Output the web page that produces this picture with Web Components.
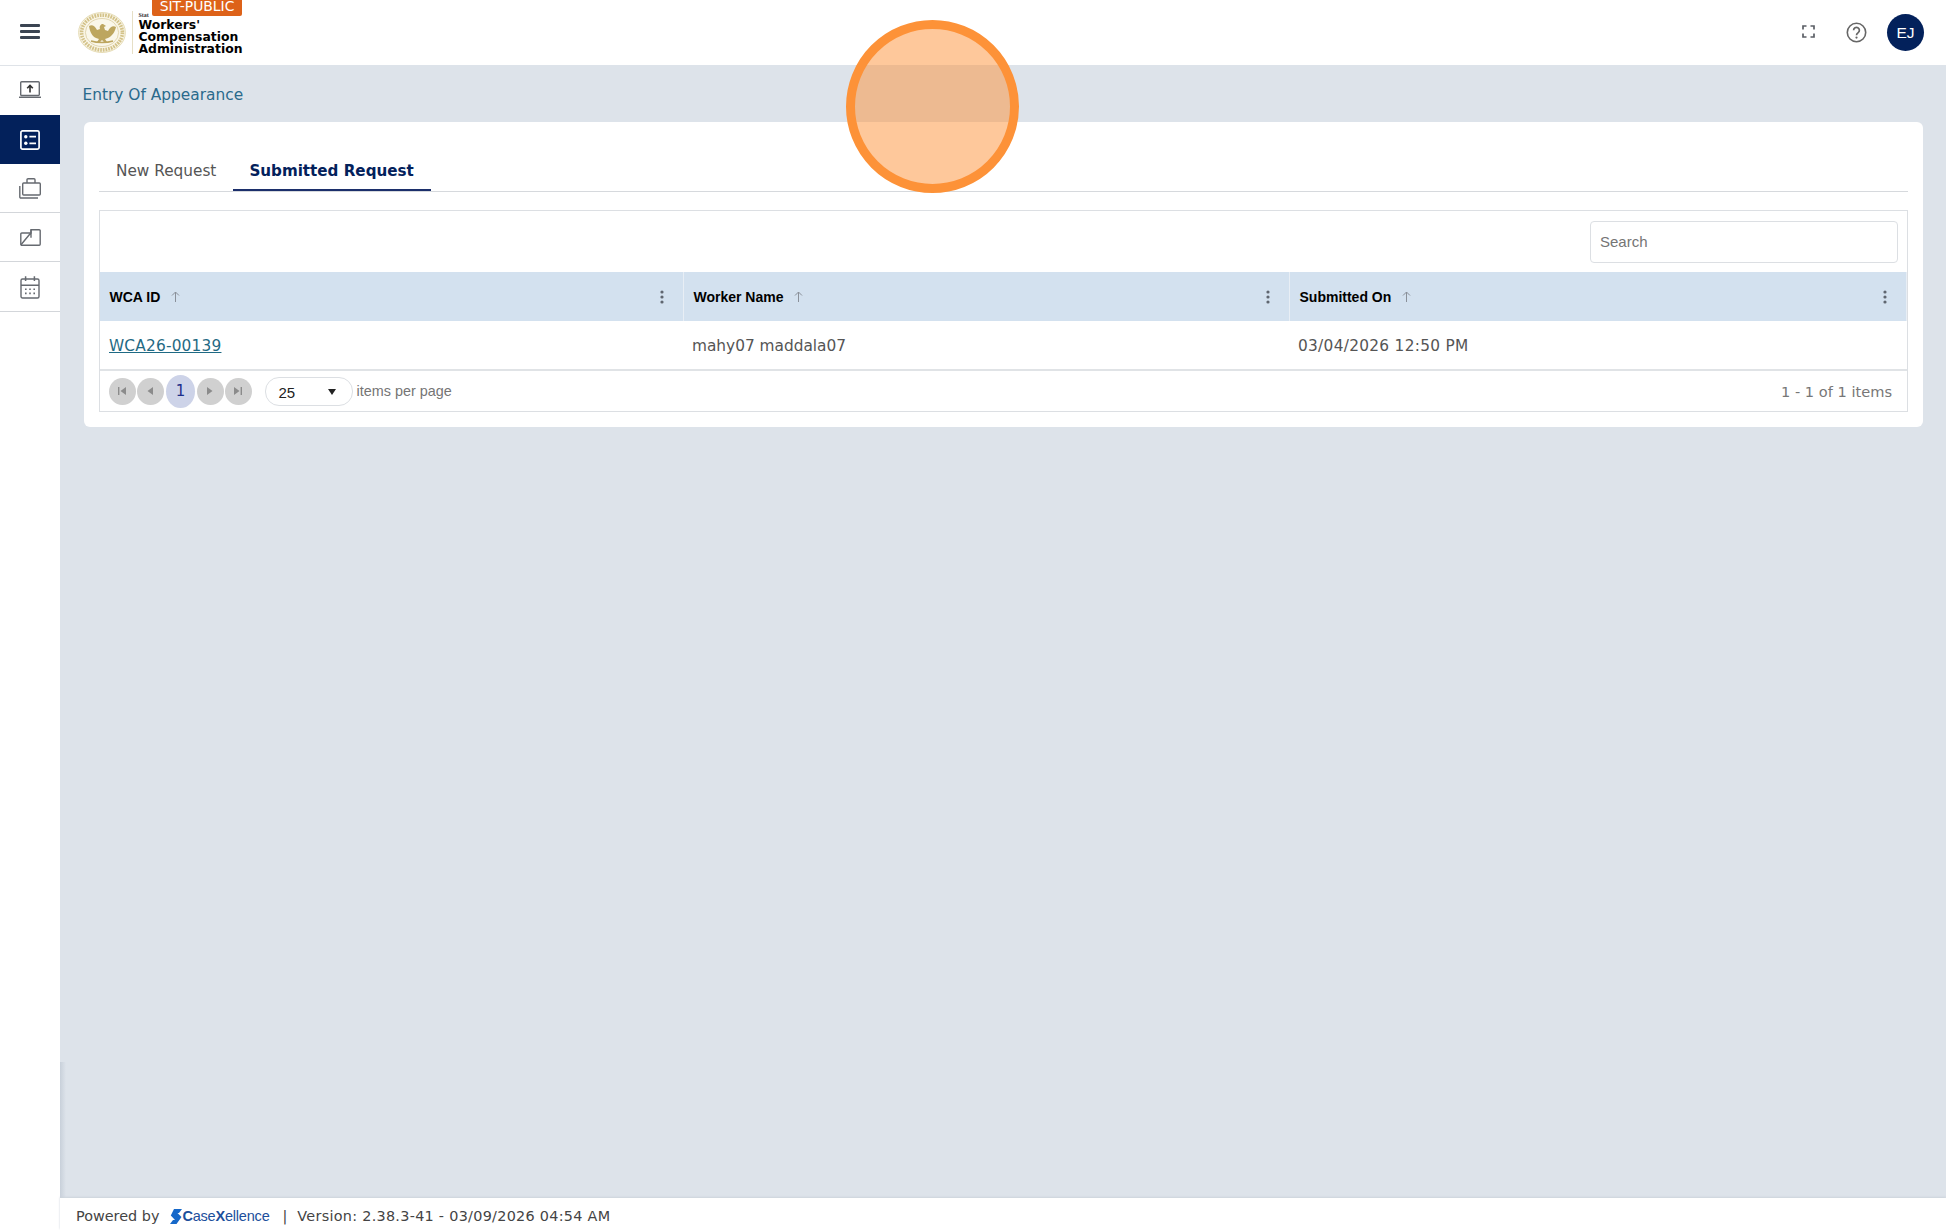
<!DOCTYPE html>
<html lang="en">
<head>
<meta charset="utf-8">
<title>Entry Of Appearance</title>
<style>
  html, body { margin: 0; height: 100%; }
  body { font-family: "DejaVu Sans", sans-serif; overflow: hidden; background: #dde3ea; }
</style>
</head>
<body>
<app-shell>
  <app-header slot="header"></app-header>
  <app-sidebar slot="sidebar"></app-sidebar>
  <page-title>Entry Of Appearance</page-title>
  <content-card>
    <tab-strip></tab-strip>
    <request-grid></request-grid>
  </content-card>
  <app-footer slot="footer"></app-footer>
</app-shell>
<click-marker></click-marker>

<script>
class AppShell extends HTMLElement {
  connectedCallback() {
    this.attachShadow({ mode: 'open' });
    this.shadowRoot.innerHTML = `
      <style>
        :host { display: flex; flex-direction: column; height: 1230px; }
        .body { flex: 1; display: flex; min-height: 0; }
        .main { flex: 1; display: flex; flex-direction: column; min-width: 0;
                background: linear-gradient(to right, #c8d0da, #dde3ea 6px) left bottom / 6px 168px no-repeat; }
        .content { flex: 1; padding: 0 23px 0 24px; }
      </style>
      <slot name="header"></slot>
      <div class="body">
        <slot name="sidebar"></slot>
        <div class="main">
          <div class="content"><slot></slot></div>
          <slot name="footer"></slot>
        </div>
      </div>
    `;
  }
}

class AppHeader extends HTMLElement {
  connectedCallback() {
    this.attachShadow({ mode: 'open' });
    this.shadowRoot.innerHTML = `
      <style>
        :host { display: flex; align-items: center; height: 65px; background: #fff; color: #000; }
        .menu { width: 20px; margin: 0 38px 2px 20px; display: flex; flex-direction: column; gap: 3.7px; }
        .menu i { display: block; height: 2.3px; background: #3b4452; border-radius: 1px; }
        .logo { position: relative; display: flex; align-items: center; height: 65px; }
        .rule { width: 1px; height: 43px; background: #e6dfc6; margin: 0 6px 0 5.5px; }
        .words { display: flex; flex-direction: column; padding-top: 2px; }
        .state { font: 700 6px/7px "Liberation Serif", serif; color: #333; }
        .name { font-weight: 700; font-size: 12.4px; line-height: 12px; }
        .badge { position: absolute; left: 74px; top: 0; width: 90px; height: 16px; background: #dd6219; color: #fff;
                 font-size: 13.9px; line-height: 12px; text-align: center; border-radius: 0 0 2px 2px; white-space: nowrap; }
        .spacer { flex: 1; }
        .tools { display: flex; align-items: center; }
        svg { display: block; }
        .avatar { width: 37px; height: 37px; border-radius: 50%; background: #03215b; color: #fff; font: 15.5px "Liberation Sans", sans-serif;
                  display: flex; align-items: center; justify-content: center; margin: 0 22px 0 20px; }
      </style>
      <div class="menu"><i></i><i></i><i></i></div>
      <div class="logo">
        <svg width="48" height="41" viewBox="0 0 48 41">
          <ellipse cx="24" cy="20.5" rx="23.4" ry="20" fill="#f9f5e6" stroke="#e0d4a6" stroke-width=".8"/>
          <ellipse cx="24" cy="20.5" rx="20.4" ry="17.4" fill="none" stroke="#d3c289" stroke-width="3.6" stroke-dasharray="1.7 1"/>
          <ellipse cx="24" cy="20.5" rx="16.6" ry="14" fill="#faf7ea" stroke="#d8c998" stroke-width=".7"/>
          <path d="M11 14c3-2 6 0 8 4l3-1c-1-3 1-5 3-5l3 2-2 1 1 3 3 1c2-4 5-6 8-4-1 5-4 9-8 11l-3 1 2 3h-3l-2-2-2 2h-3l2-3-3-1c-4-2-6-6-7-12z" fill="#bda65f"/>
          <path d="M13 29c6 2 16 2 22 0" fill="none" stroke="#bda65f" stroke-width="1.6"/>
        </svg>
        <div class="rule"></div>
        <div class="words">
          <div class="state">Stat</div>
          <div class="name">Workers'<br>Compensation<br>Administration</div>
        </div>
        <div class="badge">SIT-PUBLIC</div>
      </div>
      <div class="spacer"></div>
      <div class="tools">
        <svg width="13" height="13" viewBox="0 0 13 13" fill="none" stroke="#5b5f66" stroke-width="1.7" style="margin:0 31px 2px 0">
          <path d="M1 4.5V1h3.5M8.5 1H12v3.5M12 8.5V12H8.5M4.5 12H1V8.5"/>
        </svg>
        <svg width="21" height="21" viewBox="0 0 21 21" fill="none" stroke="#666" stroke-width="1.6">
          <circle cx="10.5" cy="10.5" r="9.2"/>
          <path d="M7.6 8.2a2.9 2.9 0 1 1 4.6 2.4c-1.1.8-1.7 1.3-1.7 2.6" stroke-width="1.7"/>
          <circle cx="10.5" cy="15.6" r="1.1" fill="#666" stroke="none"/>
        </svg>
        <div class="avatar">EJ</div>
      </div>
    `;
  }
}

class AppSidebar extends HTMLElement {
  connectedCallback() {
    this.attachShadow({ mode: 'open' });
    this.shadowRoot.innerHTML = `
      <style>
        :host { display: block; width: 60px; flex: none; background: #fff; border-top: 1px solid #dfe3e8; box-sizing: border-box; }
        .item { height: 49px; display: flex; align-items: center; justify-content: center; border-bottom: 1px solid #d3d6da; color: #666a70; box-sizing: border-box; }
        .item.first { border-bottom: none; padding-bottom: 2px; }
        .item.tall { height: 50px; padding-top: 2px; }
        .item.active { background: #03215b; color: #fff; border-bottom: none; }
        svg { display: block; fill: none; stroke: currentColor; stroke-width: 1.4; }
      </style>
      <div class="item first">
        <svg width="22" height="17" viewBox="0 0 22 17">
          <rect x="1.7" y=".7" width="18.6" height="13.8" rx="1"/>
          <path d="M0 16.3h22" stroke-width="1.5"/>
          <path d="M11 11.5V4.6M8.2 7.2L11 4.4l2.8 2.8" stroke="#333" stroke-width="1.6"/>
        </svg>
      </div>
      <div class="item active">
        <svg width="20" height="20" viewBox="0 0 20 20">
          <rect x=".9" y=".9" width="18.2" height="18.2" rx="1.6" stroke-width="1.7"/>
          <circle cx="5.8" cy="6.7" r="1.7" fill="currentColor" stroke="none"/>
          <circle cx="5.8" cy="13.3" r="1.7" fill="currentColor" stroke="none"/>
          <path d="M9.4 6.7h6.6M9.4 13.3h6.6" stroke-width="1.7"/>
        </svg>
      </div>
      <div class="item">
        <svg width="22" height="21" viewBox="0 0 22 21">
          <rect x="3.7" y="5" width="17.6" height="12" rx="1"/>
          <path d="M8 5V1.7a1 1 0 0 1 1-1h6a1 1 0 0 1 1 1V5"/>
          <path d="M.8 8v11a1 1 0 0 0 1 1H19"/>
        </svg>
      </div>
      <div class="item">
        <svg width="21" height="17" viewBox="0 0 21 17" stroke-width="1.6">
          <path d="M11 .8h8.2a1 1 0 0 1 1 1v13.4a1 1 0 0 1-1 1H1.8a1 1 0 0 1-1-1V5a1 1 0 0 1 1-1H11z"/>
          <path d="M1 15.7L10.5 4.3M11 .8v8"/>
        </svg>
      </div>
      <div class="item tall">
        <svg width="20" height="23" viewBox="0 0 20 23">
          <rect x="1" y="3" width="18" height="19" rx="1.5"/>
          <path d="M1 9.2h18M5.6 .3v4.6M14.4 .3v4.6" stroke-width="1.5"/>
          <path d="M5 13.2h1.6M9.2 13.2h1.6M13.4 13.2h1.6M5 17.4h1.6M9.2 17.4h1.6M13.4 17.4h1.6" stroke-width="1.6"/>
        </svg>
      </div>
    `;
  }
}

class PageTitle extends HTMLElement {
  connectedCallback() {
    this.attachShadow({ mode: 'open' });
    this.shadowRoot.innerHTML = `
      <style>
        :host { display: block; height: 57px; box-sizing: border-box; padding-top: 20px; margin-left: -1.5px; color: #2a6a8c; font-size: 15.4px; line-height: 20px; }
      </style>
      <slot></slot>
    `;
  }
}

class ContentCard extends HTMLElement {
  connectedCallback() {
    this.attachShadow({ mode: 'open' });
    this.shadowRoot.innerHTML = `
      <style>
        :host { display: block; background: #fff; border-radius: 6px; padding: 26px 15px 15px; }
      </style>
      <slot></slot>
    `;
  }
}

class TabStrip extends HTMLElement {
  connectedCallback() {
    this.attachShadow({ mode: 'open' });
    this.shadowRoot.innerHTML = `
      <style>
        :host { display: flex; height: 43px; border-bottom: 1px solid #d6d9dd; margin-bottom: 18px; }
        .tab { padding: 0 17px; line-height: 46px; height: 41px; font-size: 15.3px; color: #555; white-space: nowrap; }
        .tab.on { padding-left: 16px; color: #03215b; font-size: 15.15px; font-weight: 700; border-bottom: 2px solid #1c2f6b; }
      </style>
      <div class="tab">New Request</div>
      <div class="tab on">Submitted Request</div>
    `;
  }
}

class RequestGrid extends HTMLElement {
  connectedCallback() {
    this.attachShadow({ mode: 'open' });
    const head = (label) => `
      <div class="th">
        <span class="label">${label}</span>
        <svg class="sort" width="9" height="11" viewBox="0 0 9 11" fill="none" stroke="#8a9099" stroke-width="1"><path d="M4.5 11V1M1 4.5l3.5-3.5L8 4.5"/></svg>
        <svg class="kebab" width="4" height="14" viewBox="0 0 4 14" fill="#5f6670"><circle cx="2" cy="2" r="1.6"/><circle cx="2" cy="7" r="1.6"/><circle cx="2" cy="12" r="1.6"/></svg>
      </div>`;
    this.shadowRoot.innerHTML = `
      <style>
        :host { display: block; border: 1px solid #dcdfe3; color: #555; }
        .toolbar { height: 61px; display: flex; justify-content: flex-end; align-items: center; padding-right: 9px; }
        input { width: 308px; height: 42px; box-sizing: border-box; border: 1px solid #dcdfe3; border-radius: 4px; padding: 0 9px;
                font: 15px "Liberation Sans", sans-serif; outline: none; }
        input::placeholder { color: #757575; opacity: 1; }
        .cols { display: grid; grid-template-columns: 584px 606px 1fr; }
        .th { height: 49px; background: #d3e1ef; display: flex; align-items: center; padding: 0 19px 0 9.5px; box-sizing: border-box;
              border-right: 1px solid #e8eef5; font: 700 14px "Liberation Sans", sans-serif; color: #000; }
        .th:last-child { border-right: none; }
        .sort { margin-left: 10.5px; }
        .kebab { margin-left: auto; }
        .td { height: 48px; box-sizing: border-box; display: flex; align-items: center; padding: 2px 8px 0; font-size: 15.35px; }
        .td.first { padding-left: 9px; }
        .td.num { letter-spacing: .3px; }
        a { color: #1f6a84; text-decoration: underline; letter-spacing: .2px; }
        .pager { height: 40px; border-top: 2px solid #e0e3e6; display: flex; align-items: center; padding: 0 15px 0 9px; font: 14.4px "Liberation Sans", sans-serif; color: #757575; }
        .btn { width: 26.5px; height: 27px; border-radius: 50%; background: #d0d0d0; margin-right: 1.5px; display: flex; align-items: center; justify-content: center; }
        .btn.prev { margin-right: 2.5px; }
        .btn svg { display: block; fill: #8b8b8b; }
        .page { width: 29px; height: 33px; border-radius: 50%; background: #cdd3e8; color: #1c2f8b; margin-right: 2px; display: flex; align-items: center; justify-content: center; font: 15px "DejaVu Sans", sans-serif; }
        .select { width: 88px; height: 29px; box-sizing: border-box; border: 1px solid #dcdfe3; border-radius: 14px; margin: 0 4px 0 11.5px; display: flex; align-items: center; justify-content: space-between; padding: 2px 16px 0 13px; color: #222; font-size: 15px; }
        .select svg { display: block; fill: #222; }
        .count { margin-left: auto; font: 14.6px "DejaVu Sans", sans-serif; color: #777; }
      </style>
      <div class="toolbar"><input placeholder="Search"></div>
      <div class="cols">
        ${head('WCA ID')}${head('Worker Name')}${head('Submitted On')}
        <div class="td first"><a href="#">WCA26-00139</a></div>
        <div class="td">mahy07 maddala07</div>
        <div class="td num">03/04/2026 12:50 PM</div>
      </div>
      <div class="pager">
        <div class="btn"><svg width="10" height="10" viewBox="0 0 10 10"><path d="M1 1h1.4v8H1zM9 1v8L3.5 5z"/></svg></div>
        <div class="btn prev"><svg width="10" height="10" viewBox="0 0 10 10"><path d="M8 1v8L2.5 5z"/></svg></div>
        <div class="page">1</div>
        <div class="btn"><svg width="10" height="10" viewBox="0 0 10 10"><path d="M2 1v8l5.5-4z"/></svg></div>
        <div class="btn"><svg width="10" height="10" viewBox="0 0 10 10"><path d="M1 1v8l5.5-4zM7.6 1H9v8H7.6z"/></svg></div>
        <div class="select"><span>25</span><svg width="8" height="6" viewBox="0 0 8 6"><path d="M0 0h8L4 6z"/></svg></div>
        <span>items per page</span>
        <span class="count">1 - 1 of 1 items</span>
      </div>
    `;
  }
}

class AppFooter extends HTMLElement {
  connectedCallback() {
    this.attachShadow({ mode: 'open' });
    this.shadowRoot.innerHTML = `
      <style>
        :host { display: flex; align-items: center; height: 29px; padding: 3px 0 0 16px; background: #fff; font-size: 14.4px; color: #444; box-shadow: 0 -1px 2px #ccd3db; white-space: nowrap; }
        .brand { display: flex; align-items: center; margin: 1px 13px 0 11px; color: #1c4f9c; font: 14.5px "Liberation Sans", sans-serif; letter-spacing: -.2px; }
        .brand b { font-weight: 700; }
        svg { display: block; }
        .version { letter-spacing: .28px; }
      </style>
      <span>Powered by</span>
      <span class="brand">
        <svg width="12" height="15" viewBox="0 0 12 15"><path d="M4 0h8L9 4H7.5l4 4-5 7H0l3-4h2L.8 6.5z" fill="#1668c9"/></svg>
        <span><b>C</b>ase<b>X</b>ellence</span>
      </span>
      <span class="version">|&nbsp;&nbsp;Version: 2.38.3-41 - 03/09/2026 04:54 AM</span>
    `;
  }
}

class ClickMarker extends HTMLElement {
  connectedCallback() {
    this.attachShadow({ mode: 'open' });
    this.shadowRoot.innerHTML = `
      <style>
        :host { position: absolute; left: 846px; top: 20px; width: 173px; height: 173px; box-sizing: border-box;
                border-radius: 50%; border: 9px solid #fd9238; background: rgba(253, 146, 56, .5); }
      </style>
    `;
  }
}

customElements.define('app-shell', AppShell);
customElements.define('app-header', AppHeader);
customElements.define('app-sidebar', AppSidebar);
customElements.define('page-title', PageTitle);
customElements.define('content-card', ContentCard);
customElements.define('tab-strip', TabStrip);
customElements.define('request-grid', RequestGrid);
customElements.define('app-footer', AppFooter);
customElements.define('click-marker', ClickMarker);
</script>
</body>
</html>
